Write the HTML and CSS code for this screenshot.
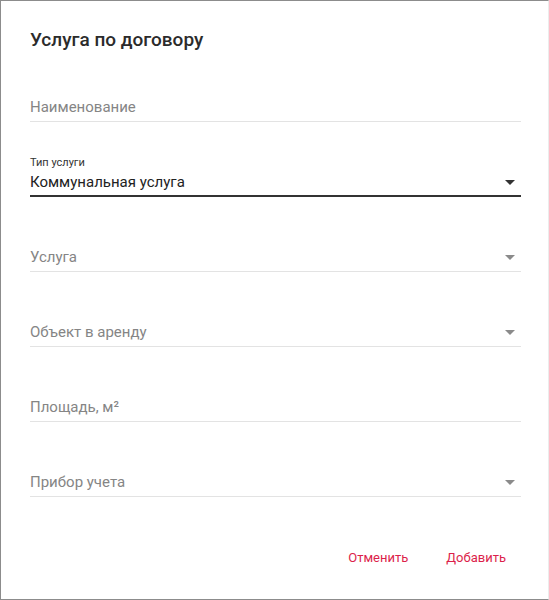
FILE: index.html
```html
<!DOCTYPE html>
<html lang="ru">
<head>
<meta charset="utf-8">
<title>Услуга по договору</title>
<link rel="stylesheet" href="styles.css">
</head>
<body>
<div class="dialog">
  <h2 class="title">Услуга по договору</h2>
  <div class="form">
    <div class="field first">
      <div class="row"><span class="placeholder">Наименование</span></div>
    </div>
    <div class="field filled">
      <div class="label">Тип услуги</div>
      <div class="row">
        <span class="value">Коммунальная услуга</span>
        <svg class="arrow dark" viewBox="0 0 24 24" width="24" height="24"><path d="M7 10l5 5 5-5z"/></svg>
      </div>
    </div>
    <div class="field">
      <div class="row">
        <span class="placeholder">Услуга</span>
        <svg class="arrow" viewBox="0 0 24 24" width="24" height="24"><path d="M7 10l5 5 5-5z"/></svg>
      </div>
    </div>
    <div class="field">
      <div class="row">
        <span class="placeholder">Объект в аренду</span>
        <svg class="arrow" viewBox="0 0 24 24" width="24" height="24"><path d="M7 10l5 5 5-5z"/></svg>
      </div>
    </div>
    <div class="field">
      <div class="row"><span class="placeholder">Площадь, м²</span></div>
    </div>
    <div class="field">
      <div class="row">
        <span class="placeholder">Прибор учета</span>
        <svg class="arrow" viewBox="0 0 24 24" width="24" height="24"><path d="M7 10l5 5 5-5z"/></svg>
      </div>
    </div>
  </div>
  <div class="actions">
    <button class="btn">Отменить</button>
    <button class="btn">Добавить</button>
  </div>
</div>
</body>
</html>
```

FILE: styles.css
```css
html, body {
  margin: 0;
  padding: 0;
  background: #ffffff;
}

body {
  font-family: Roboto, "Noto Sans", "Liberation Sans", sans-serif;
}

.dialog {
  box-sizing: border-box;
  width: 549px;
  height: 600px;
  border-top: 1px solid #8c8c8c;
  border-left: 1px solid #8c8c8c;
  border-bottom: 1px solid #8c8c8c;
  border-right: 1px solid #ececec;
  padding: 27px 27px 0 29px;
  background: #fff;
}

.title {
  margin: 0;
  font-size: 19px;
  line-height: 24px;
  font-weight: 500;
  color: #2b2b2b;
}

.form {
  display: flex;
  flex-direction: column;
  gap: 5px;
}

.field {
  box-sizing: border-box;
  height: 70px;
  display: flex;
  flex-direction: column;
  justify-content: flex-end;
  padding-bottom: 2px;
  border-bottom: 1px solid #e3e3e3;
}

.field.filled {
  padding-bottom: 1px;
  border-bottom: 2px solid #333333;
}

.label {
  font-size: 11px;
  line-height: 14px;
  color: #333;
}

.row {
  display: flex;
  align-items: center;
  justify-content: space-between;
  height: 24px;
  font-size: 15px;
  line-height: 24px;
}

.placeholder {
  color: #858585;
}

.value {
  color: #222;
}

.arrow {
  display: block;
  fill: #8a8a8a;
  margin-right: -1px;
}

.arrow.dark {
  fill: #333;
}

.actions {
  display: flex;
  justify-content: flex-end;
  gap: 8px;
  margin-top: 42px;
}

.btn {
  height: 36px;
  padding: 0 15px;
  border: none;
  background: transparent;
  font-family: Roboto, "Noto Sans", "Liberation Sans", sans-serif;
  font-size: 13px;
  font-weight: 400;
  color: #dc1f4b;
  cursor: pointer;
}
```
